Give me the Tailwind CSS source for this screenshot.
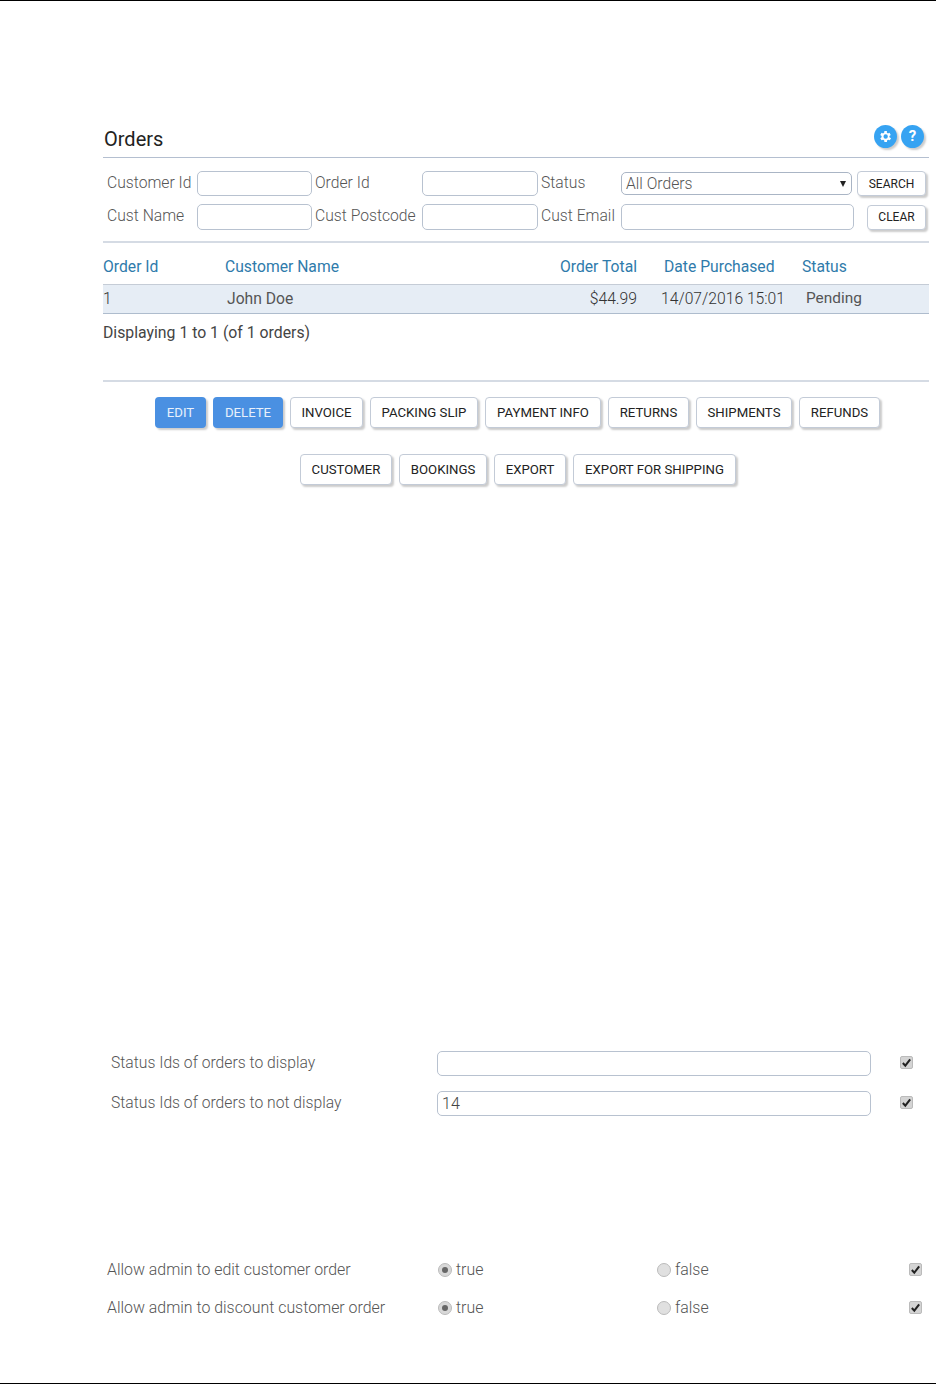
<!DOCTYPE html>
<html lang="en">
<head>
    <meta charset="utf-8">
    <meta name="viewport" content="width=device-width, initial-scale=1.0">
    <title>Orders</title>
    <script src="https://cdn.jsdelivr.net/npm/@tailwindcss/browser@4"></script>
</head>
<body class="bg-white font-['Roboto',sans-serif] text-[#444] overflow-hidden">
<div class="w-[936px] h-[1384px] flex flex-col border-t border-b border-black">

    <!-- orders panel -->
    <div class="ml-[103px] w-[826px] mt-[122px]">
        <div class="flex items-center justify-between h-[35px] border-b border-[#b4bfd0] pl-[1px]">
            <h1 class="text-[20px] text-[#222] pb-[2px]">Orders</h1>
            <div class="flex gap-[4px] pr-[5px] pb-[7px]">
                <span class="w-[23px] h-[23px] rounded-full bg-[#36a3f2] shadow-[2px_2px_2px_#ccc] flex items-center justify-center">
                    <svg viewBox="0 0 24 24" class="w-[15px] h-[15px]" fill="#fff"><path d="M19.4 13a7.6 7.6 0 0 0 0-2l2.1-1.6-2-3.4-2.5 1a7.5 7.5 0 0 0-1.7-1L15.400 3.300h-4l-.4 2.700a7.500 7.500 0 0 0-1.700 1l-2.500-1-2 3.400L6.900 11a7.600 7.600 0 0 0 0 2l-2.100 1.600 2 3.400 2.500-1a7.500 7.500 0 0 0 1.700 1l.4 2.700h4l.4-2.700a7.500 7.500 0 0 0 1.700-1l2.500 1 2-3.400zM13.400 15.500a3.500 3.500 0 1 1 0-7 3.500 3.500 0 0 1 0 7z" transform="translate(-1.150 0)"/></svg>
                </span>
                <span class="w-[23px] h-[23px] rounded-full bg-[#36a3f2] shadow-[2px_2px_2px_#ccc] flex items-center justify-center text-white text-[15px] font-bold leading-none">?</span>
            </div>
        </div>

        <!-- filters -->
        <div class="border-b-2 border-[#d5dbe4] h-[85px] pt-[13px] text-[15.7px] font-light text-[#555]">
            <div class="flex items-center h-[25px] pl-[4px]">
                <label class="w-[90px] pb-[2px]">Customer Id</label>
                <input class="w-[115px] h-[25px] border border-[#b8c2d0] rounded-[5px]">
                <label class="w-[110px] pl-[3px] pb-[2px]">Order Id</label>
                <input class="w-[116px] h-[25px] border border-[#b8c2d0] rounded-[5px]">
                <label class="w-[83px] pl-[3px] pb-[2px]">Status</label>
                <div class="relative w-[231px] h-[23px] border border-[#aab5c5] rounded-[5px] flex items-center pl-[4px] justify-between pr-[5px]">
                    <span class="font-light">All Orders</span>
                    <span class="w-0 h-0 border-l-[3.500px] border-r-[3.500px] border-t-[6px] border-l-transparent border-r-transparent border-t-[#222]"></span>
                </div>
                <button class="ml-[5px] w-[69px] h-[25px] border border-[#c3cbd7] rounded-[4px] bg-white shadow-[2px_2px_2px_#ccc] text-[12px] font-normal text-[#222]">SEARCH</button>
            </div>
            <div class="flex items-center h-[26px] mt-[8px] pl-[4px]">
                <label class="w-[90px] pb-[2px]">Cust Name</label>
                <input class="w-[115px] h-[26px] border border-[#b8c2d0] rounded-[5px]">
                <label class="w-[110px] pl-[3px] pb-[2px]">Cust Postcode</label>
                <input class="w-[116px] h-[26px] border border-[#b8c2d0] rounded-[5px]">
                <label class="w-[83px] pl-[3px] pb-[2px]">Cust Email</label>
                <input class="w-[233px] h-[26px] border border-[#b8c2d0] rounded-[5px]">
                <button class="ml-[13px] w-[59px] h-[25px] border border-[#c3cbd7] rounded-[4px] bg-white shadow-[2px_2px_2px_#ccc] text-[12px] font-normal text-[#222]">CLEAR</button>
            </div>
        </div>

        <!-- table -->
        <div class="grid grid-cols-[122px_334px_105px_138px_127px] h-[41px] items-center text-[15.7px] text-[#2f7bab] pt-[7px]">
            <span>Order Id</span>
            <span>Customer Name</span>
            <span class="text-right pr-[27px]">Order Total</span>
            <span>Date Purchased</span>
            <span>Status</span>
        </div>
        <div class="grid grid-cols-[122px_334px_105px_138px_127px] h-[30px] items-center text-[15.7px] font-light text-[#333] bg-[#e6edf5] border-t border-t-[#c5ccd6] border-b border-b-[#aebccd]">
            <span>1</span>
            <span class="pl-[2px] font-normal text-[#555]">John Doe</span>
            <span class="text-right pr-[27px]">$44.99</span>
            <span class="whitespace-nowrap -ml-[3px]">14/07/2016 15:01</span>
            <span class="pl-[4px] font-normal text-[15.4px] text-[#555]">Pending</span>
        </div>
        <p class="text-[15.8px] text-[#444] mt-[7px]">Displaying 1 to 1 (of 1 orders)</p>
    </div>

    <!-- action buttons -->
    <div class="ml-[103px] w-[826px] mt-[35px] border-t-2 border-[#d5dbe4] pt-[15px] text-[13.2px] text-[#222]">
        <div class="flex justify-center gap-[7px] h-[31px] pl-[3px]">
            <button class="w-[51px] pt-[2px] rounded-[4px] bg-[#4a90e2] text-[#e8f0fb] shadow-[2px_2px_2px_#ccc]">EDIT</button>
            <button class="w-[70px] pt-[2px] rounded-[4px] bg-[#4a90e2] text-[#e8f0fb] shadow-[2px_2px_2px_#ccc]">DELETE</button>
            <button class="w-[73px] pt-[2px] border border-[#c3cbd7] rounded-[4px] bg-white shadow-[2px_2px_2px_#ccc]">INVOICE</button>
            <button class="w-[108px] pt-[2px] border border-[#c3cbd7] rounded-[4px] bg-white shadow-[2px_2px_2px_#ccc]">PACKING SLIP</button>
            <button class="w-[116px] pt-[2px] border border-[#c3cbd7] rounded-[4px] bg-white shadow-[2px_2px_2px_#ccc]">PAYMENT INFO</button>
            <button class="w-[81px] pt-[2px] border border-[#c3cbd7] rounded-[4px] bg-white shadow-[2px_2px_2px_#ccc]">RETURNS</button>
            <button class="w-[96px] pt-[2px] border border-[#c3cbd7] rounded-[4px] bg-white shadow-[2px_2px_2px_#ccc]">SHIPMENTS</button>
            <button class="w-[81px] pt-[2px] border border-[#c3cbd7] rounded-[4px] bg-white shadow-[2px_2px_2px_#ccc]">REFUNDS</button>
        </div>
        <div class="flex justify-center gap-[7px] h-[31px] mt-[26px] pl-[4px]">
            <button class="w-[92px] pt-[2px] border border-[#c3cbd7] rounded-[4px] bg-white shadow-[2px_2px_2px_#ccc]">CUSTOMER</button>
            <button class="w-[88px] pt-[2px] border border-[#c3cbd7] rounded-[4px] bg-white shadow-[2px_2px_2px_#ccc]">BOOKINGS</button>
            <button class="w-[72px] pt-[2px] border border-[#c3cbd7] rounded-[4px] bg-white shadow-[2px_2px_2px_#ccc]">EXPORT</button>
            <button class="w-[163px] pt-[2px] border border-[#c3cbd7] rounded-[4px] bg-white shadow-[2px_2px_2px_#ccc]">EXPORT FOR SHIPPING</button>
        </div>
    </div>

    <!-- status id settings -->
    <div class="ml-[111px] mt-[566px] text-[15.7px] font-light text-[#555] flex flex-col gap-[15px]">
        <div class="flex items-center h-[25px]">
            <label class="w-[326px]">Status Ids of orders to display</label>
            <input class="w-[434px] h-[25px] border border-[#b8c2d0] rounded-[5px]">
            <span class="ml-[29px] -mt-[2px] w-[13px] h-[13px] rounded-[2px] bg-[#d4d4d4] border border-[#bbb] flex items-center justify-center">
                <svg viewBox="0 0 12 12" class="w-[11px] h-[11px]"><path d="M2 6.500 L4.700 9.500 L10 2.500" fill="none" stroke="#222" stroke-width="2.200"/></svg>
            </span>
        </div>
        <div class="flex items-center h-[25px]">
            <label class="w-[326px]">Status Ids of orders to not display</label>
            <input value="14" class="w-[434px] h-[25px] border border-[#b8c2d0] rounded-[5px] pl-[4px] text-[16px] font-light text-[#444]">
            <span class="ml-[29px] -mt-[2px] w-[13px] h-[13px] rounded-[2px] bg-[#d4d4d4] border border-[#bbb] flex items-center justify-center">
                <svg viewBox="0 0 12 12" class="w-[11px] h-[11px]"><path d="M2 6.500 L4.700 9.500 L10 2.500" fill="none" stroke="#222" stroke-width="2.200"/></svg>
            </span>
        </div>
    </div>

    <!-- admin settings -->
    <div class="ml-[107px] mt-[144px] text-[15.9px] font-light text-[#555] flex flex-col gap-[18px]">
        <div class="flex items-center h-[20px]">
            <label class="w-[331px]">Allow admin to edit customer order</label>
            <span class="w-[14px] h-[14px] rounded-full bg-[#d8d8d8] border border-[#bbb] flex items-center justify-center"><span class="w-[6px] h-[6px] rounded-full bg-[#666]"></span></span>
            <span class="ml-[4px] w-[201px]">true</span>
            <span class="w-[14px] h-[14px] rounded-full bg-[#e0e0e0] border border-[#bbb]"></span>
            <span class="ml-[4px] w-[234px]">false</span>
            <span class="w-[13px] h-[13px] rounded-[2px] bg-[#d4d4d4] border border-[#bbb] flex items-center justify-center">
                <svg viewBox="0 0 12 12" class="w-[11px] h-[11px]"><path d="M2 6.500 L4.700 9.500 L10 2.500" fill="none" stroke="#222" stroke-width="2.200"/></svg>
            </span>
        </div>
        <div class="flex items-center h-[20px]">
            <label class="w-[331px]">Allow admin to discount customer order</label>
            <span class="w-[14px] h-[14px] rounded-full bg-[#d8d8d8] border border-[#bbb] flex items-center justify-center"><span class="w-[6px] h-[6px] rounded-full bg-[#666]"></span></span>
            <span class="ml-[4px] w-[201px]">true</span>
            <span class="w-[14px] h-[14px] rounded-full bg-[#e0e0e0] border border-[#bbb]"></span>
            <span class="ml-[4px] w-[234px]">false</span>
            <span class="w-[13px] h-[13px] rounded-[2px] bg-[#d4d4d4] border border-[#bbb] flex items-center justify-center">
                <svg viewBox="0 0 12 12" class="w-[11px] h-[11px]"><path d="M2 6.500 L4.700 9.500 L10 2.500" fill="none" stroke="#222" stroke-width="2.200"/></svg>
            </span>
        </div>
    </div>

</div>
</body>
</html>
